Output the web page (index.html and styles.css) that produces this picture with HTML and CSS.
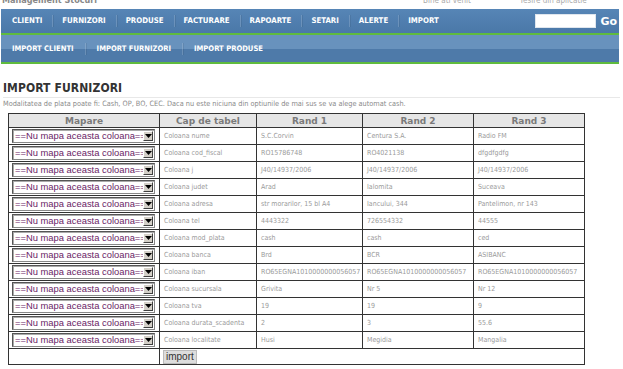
FILE: index.html
```html
<!DOCTYPE html>
<html>
<head>
<meta charset="utf-8">
<title>Import furnizori</title>
<link rel="stylesheet" href="styles.css">
</head>
<body>
<header class="top">
  <span class="brand">Management Stocuri</span>
  <span class="welcome">Bine ati venit</span>
  <span class="logout">Iesire din aplicatie</span>
</header>
<nav class="menu">
  <ul class="items">
    <li>CLIENTI</li><li>FURNIZORI</li><li>PRODUSE</li><li>FACTURARE</li><li>RAPOARTE</li><li>SETARI</li><li>ALERTE</li><li class="last">IMPORT</li>
  </ul>
  <div class="search"><input class="search-box" type="text"><span class="go">Go</span></div>
</nav>
<nav class="submenu">
  <ul class="items">
    <li>IMPORT CLIENTI</li><li>IMPORT FURNIZORI</li><li class="last">IMPORT PRODUSE</li>
  </ul>
</nav>
<main class="content">
  <h1 class="title">IMPORT FURNIZORI</h1>
  <p class="note">Modalitatea de plata poate fi: Cash, OP, BO, CEC. Daca nu este niciuna din optiunile de mai sus se va alege automat cash.</p>
  <table class="grid">
    <colgroup><col class="c-map"><col class="c-cap"><col class="c-r1"><col class="c-r2"><col class="c-r3"></colgroup>
    <thead><tr><th>Mapare</th><th>Cap de tabel</th><th>Rand 1</th><th>Rand 2</th><th>Rand 3</th></tr></thead>
    <tbody id="rows"></tbody>
    <tfoot><tr><td></td><td colspan="4"><button class="import" type="button">import</button></td></tr></tfoot>
  </table>
</main>
<script src="app.js"></script>
</body>
</html>
```

FILE: app.js
```js
var data = [
  ["nume", "S.C.Corvin", "Centura S.A.", "Radio FM"],
  ["cod_fiscal", "RO15786748", "RO4021138", "dfgdfgdfg"],
  ["j", "J40/14937/2006", "J40/14937/2006", "J40/14937/2006"],
  ["judet", "Arad", "Ialomita", "Suceava"],
  ["adresa", "str morarilor, 15 bl A4", "Iancului, 344", "Pantelimon, nr 143"],
  ["tel", "4443322", "726554332", "44555"],
  ["mod_plata", "cash", "cash", "ced"],
  ["banca", "Brd", "BCR", "ASIBANC"],
  ["iban", "RO65EGNA1010000000056057", "RO65EGNA1010000000056057", "RO65EGNA1010000000056057"],
  ["sucursala", "Grivita", "Nr 5", "Nr 12"],
  ["tva", "19", "19", "9"],
  ["durata_scadenta", "2", "3", "55.6"],
  ["localitate", "Husi", "Megidia", "Mangalia"]
];
var body = document.getElementById("rows");
var html = "";
data.forEach(function (r) {
  html += '<tr><td class="map"><span class="sel"><span class="sel-val">==Nu mapa aceasta coloana==</span>' +
    '<span class="sel-btn"><svg width="7" height="4" viewBox="0 0 7 4"><path d="M0 0H7L3.5 4Z" fill="#000"/></svg></span></span></td>' +
    '<td>Coloana ' + r[0] + '</td><td>' + r[1] + '</td><td>' + r[2] + '</td><td>' + r[3] + '</td></tr>';
});
body.innerHTML = html;
```

FILE: styles.css
```css
html, body { margin: 0; padding: 0; background: #fff; }
body { font-family: "DejaVu Sans Condensed", "DejaVu Sans", sans-serif; color: #333; width: 623px; overflow: hidden; }

.top { height: 9px; overflow: hidden; display: flex; font-size: 9px; color: #888; line-height: 9px; }
.top span { display: block; margin-top: -4px; }
.brand { margin-left: 2px; font-weight: bold; }
.welcome { margin-left: 326px; font-size: 8px; color: #aaa; }
.logout { margin-left: 50px; font-size: 8px; color: #aaa; }

.items { list-style: none; margin: 0; padding: 0; display: flex; }
.items li { color: #fff; font-weight: bold; font-size: 7.6px; border-right: 1px solid rgba(255,255,255,0.16); box-shadow: 1px 0 0 rgba(0,0,0,0.07); }
.items li.last { border-right: 0; box-shadow: none; }

.menu { margin: 0 4px 0 1px; height: 24px; display: flex; align-items: center; justify-content: space-between;
  background: linear-gradient(#5685b6, #4a78a8); border-bottom: 2px solid #5fbb3e; }
.menu .items li { font-size: 7.8px; padding: 0 10px 0 9px; line-height: 12px; }
.menu .items li:first-child { padding-left: 11px; }
.search { display: flex; align-items: center; margin-right: 2px; }
.search-box { width: 59px; height: 12px; padding: 0; border: 1px solid #dfe6ee; background: #fff; margin: 0 4px 0 0; }
.go { color: #fff; font-weight: bold; font-size: 11px; font-family: "DejaVu Sans", sans-serif; }

.submenu { margin: 0 4px 0 1px; height: 27px; display: flex; align-items: center;
  background: linear-gradient(#6892bd 0, #6892bd 50%, #4e7aa9 50%, #4e7aa9 100%); border-bottom: 2px solid #5fbb3e; }
.submenu .items li { padding: 0 11px; line-height: 12px; }
.submenu .items li:first-child { padding-left: 11px; }

.content { padding: 17px 0 0 3px; }
.title { margin: 0; font-size: 12px; font-weight: bold; color: #333; line-height: 15px; padding-bottom: 1px; border-bottom: 1px solid #e8e8e8; margin-right: 3px; letter-spacing: 0.1px; }
.note { margin: 1px 0 0; font-size: 7.3px; color: #8a8a8a; line-height: 10px; }

.grid { margin: 4px 0 0 5px; border-collapse: collapse; table-layout: fixed; width: 577px; border: 1px solid #333; }
.c-map { width: 151px; } .c-cap { width: 97px; } .c-r1 { width: 106px; } .c-r2 { width: 111px; } .c-r3 { width: 111px; }
.grid th { background: #e6e6e6; color: #7a7a7a; font-family: "DejaVu Sans", sans-serif; font-size: 9px; font-weight: bold; height: 13px; padding: 0; border: 1px solid #333; line-height: 12px; }
.grid td { border: 1px solid #333; height: 16px; padding: 0 0 0 4px; font-size: 7px; color: #9a9a9a; white-space: nowrap; overflow: hidden; }
.grid td.map { padding: 0 0 0 3px; }
.sel { display: flex; width: 143px; height: 14px; box-sizing: border-box; border: 1px solid #888; border-top-color: #555; border-left-color: #555; background: #fff; align-items: center; box-shadow: inset 1px 1px 0 #aaa; }
.sel-val { flex: 1; font-family: "Liberation Sans", Arial, sans-serif; font-size: 9.4px; color: #6a2466; padding-left: 2px; overflow: hidden; white-space: nowrap; line-height: 12px; }
.sel-btn { width: 10px; height: 10px; margin-right: 1px; background: #d4d0c8; border: 1px solid; border-color: #fff #404040 #404040 #fff; display: flex; align-items: center; justify-content: center; box-sizing: border-box; }
.sel-btn svg { display: block; }
.grid tfoot td { height: 15px; padding: 0 0 0 3px; }
.import { font-family: "Liberation Sans", Arial, sans-serif; font-size: 10px; color: #333; background: #ddd; border: 1px solid #bbb; padding: 0 2px; height: 14px; line-height: 12px; }
```
